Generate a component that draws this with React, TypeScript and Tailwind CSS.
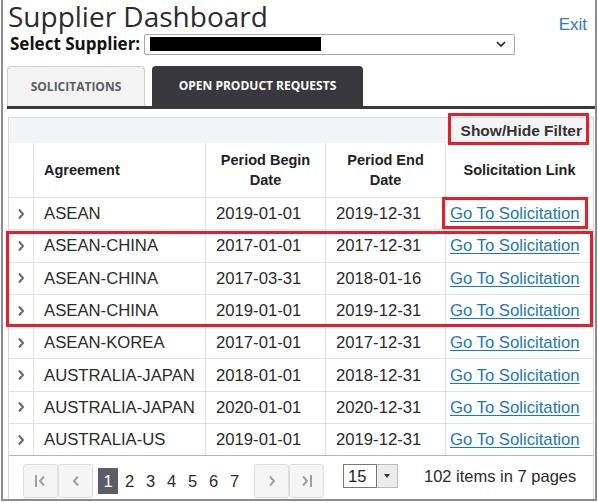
const rows = [
  ["ASEAN", "2019-01-01", "2019-12-31"],
  ["ASEAN-CHINA", "2017-01-01", "2017-12-31"],
  ["ASEAN-CHINA", "2017-03-31", "2018-01-16"],
  ["ASEAN-CHINA", "2019-01-01", "2019-12-31"],
  ["ASEAN-KOREA", "2017-01-01", "2017-12-31"],
  ["AUSTRALIA-JAPAN", "2018-01-01", "2018-12-31"],
  ["AUSTRALIA-JAPAN", "2020-01-01", "2020-12-31"],
  ["AUSTRALIA-US", "2019-01-01", "2019-12-31"],
];

const cols = "grid grid-cols-[25px_172px_120px_120px_1fr]";

function Chevron({ dir = "right", className = "" }: { dir?: "left" | "right"; className?: string }) {
  return (
    <svg width="8" height="12" viewBox="0 0 8 12" className={className}>
      <path
        d={dir === "right" ? "M2 1.5 L6 6 L2 10.5" : "M6 1.5 L2 6 L6 10.5"}
        fill="none"
        stroke="currentColor"
        strokeWidth="2"
      />
    </svg>
  );
}

function PagerButton({ children }: { children: React.ReactNode }) {
  return (
    <div className="w-[35px] h-[34px] flex items-center justify-center bg-[#f5f5f5] border border-[#dedede] rounded-[3px] text-[#a0a0a0]">
      {children}
    </div>
  );
}

export default function App() {
  return (
    <div className="relative w-[598px] h-[503px] bg-white overflow-hidden font-['Liberation_Sans',Arial,sans-serif] text-[#333]">
      <div className="ml-[1px] w-[596px] h-[501px] border-x-2 border-b-2 border-[#8c8c8c] flex flex-col">
        <div className="flex justify-between h-[32px]">
          <h1 className="pl-[5px] text-[28px] leading-[32px] font-['Open_Sans',sans-serif] text-[#2b2b2b]">
            Supplier Dashboard
          </h1>
          <a className="mt-[15px] mr-[8px] text-[17px] leading-[20px] text-[#2b7cb9]">Exit</a>
        </div>

        <div className="flex items-center h-[22px] mt-[1px] pl-[7px]">
          <span className="font-['Open_Sans',sans-serif] font-bold text-[17px] text-[#111] mr-[4px]">
            Select Supplier:
          </span>
          <div className="w-[371px] h-[21px] border border-[#a9a9a9] rounded-[2px] flex items-center pl-[5px] pr-[8px] justify-between">
            <div className="w-[171px] h-[14px] bg-black" />
            <svg width="10" height="7" viewBox="0 0 10 7">
              <path d="M1 1 L5 5 L9 1" fill="none" stroke="#222" strokeWidth="1.6" />
            </svg>
          </div>
        </div>

        <div className="mt-[11px] ml-[4px] flex items-end gap-[7px] h-[40px]">
          <div className="w-[138px] h-[40px] bg-[#f3f3f4] border border-b-0 border-[#cfcfd2] rounded-t-[4px] flex items-center justify-center font-['Open_Sans',sans-serif] font-bold text-[12px] text-[#5a5e66]">
            SOLICITATIONS
          </div>
          <div className="w-[211px] h-[40px] bg-[#38383d] rounded-t-[4px] flex items-center justify-center font-['Open_Sans',sans-serif] font-bold text-[12px] text-white">
            OPEN PRODUCT REQUESTS
          </div>
        </div>
        <div className="ml-[4px] h-[3px] bg-[#38383d]" />

        <div className="mt-[8px] ml-[5px] mr-[1px] flex-1 border border-[#d8d8d8] border-b-0 flex flex-col">
          <div className="h-[25px] shrink-0 bg-[#f3f4f5] flex justify-end items-center pr-[11px]">
            <span className="font-bold text-[15.5px] text-[#333]">Show/Hide Filter</span>
          </div>

          <div className={`${cols} h-[55px] shrink-0 font-bold text-[14.5px] leading-[20px] text-[#222] border-b border-[#e2e2e2]`}>
            <div className="border-r border-[#e2e2e2]" />
            <div className="flex items-center pl-[10px] border-r border-[#e2e2e2]">Agreement</div>
            <div className="flex items-center justify-center text-center border-r border-[#e2e2e2]">
              Period Begin
              <br />
              Date
            </div>
            <div className="flex items-center justify-center text-center border-r border-[#e2e2e2]">
              Period End
              <br />
              Date
            </div>
            <div className="flex items-center justify-center">Solicitation Link</div>
          </div>

          {rows.map(([name, begin, end], i) => (
            <div
              key={i}
              className={`${cols} h-[32.3px] shrink-0 text-[16.7px] text-[#2b2b2b] border-b ${
                i === rows.length - 1 ? "border-[#b5b5b5]" : "border-[#e2e2e2]"
              }`}
            >
              <div className="flex items-center justify-center border-r border-[#e2e2e2] text-[#6a6a6a]">
                <Chevron />
              </div>
              <div className="flex items-center pl-[10px] border-r border-[#e2e2e2]">{name}</div>
              <div className="flex items-center pl-[10px] border-r border-[#e2e2e2]">{begin}</div>
              <div className="flex items-center pl-[10px] border-r border-[#e2e2e2]">{end}</div>
              <div className="flex items-center pl-[4px]">
                <a className="text-[#1d78b8] underline underline-offset-[2px]">Go To Solicitation</a>
              </div>
            </div>
          ))}

          <div className="flex items-start pt-[8px] pl-[14px]">
            <div className="flex">
              <PagerButton>
                <span className="flex items-center gap-[1px]">
                  <span className="w-[2px] h-[12px] bg-[#a0a0a0]" />
                  <Chevron dir="left" />
                </span>
              </PagerButton>
              <PagerButton>
                <Chevron dir="left" />
              </PagerButton>
            </div>
            <div className="flex items-center h-[34px] ml-[5px] text-[16.5px] text-[#2b2b2b]">
              <span className="w-[20px] h-[26px] bg-[#5e5d66] text-white flex items-center justify-center mr-[1px]">1</span>
              {[2, 3, 4, 5, 6, 7].map((n) => (
                <span key={n} className="w-[21px] text-center">
                  {n}
                </span>
              ))}
            </div>
            <div className="flex ml-[9px]">
              <PagerButton>
                <Chevron />
              </PagerButton>
              <PagerButton>
                <span className="flex items-center gap-[1px]">
                  <Chevron />
                  <span className="w-[2px] h-[12px] bg-[#a0a0a0]" />
                </span>
              </PagerButton>
            </div>
            <div className="ml-[19px] flex h-[24px]">
              <div className="w-[34px] border border-[#777] flex items-center pl-[4px] text-[16.5px] text-[#222]">15</div>
              <div className="w-[21px] border border-l-0 border-[#bbb] bg-[#ececec] flex items-center justify-center">
                <svg width="6" height="4" viewBox="0 0 6 4">
                  <path d="M0 0 L6 0 L3 4 Z" fill="#333" />
                </svg>
              </div>
            </div>
            <span className="ml-[26px] leading-[24px] text-[16.5px] text-[#2b2b2b]">102 items in 7 pages</span>
          </div>
        </div>
      </div>

      <div className="absolute left-[448px] top-[113px] w-[141px] h-[32px] border-[3px] border-[#e61e2a]" />
      <div className="absolute left-[442px] top-[197px] w-[146px] h-[32px] border-[3px] border-[#e61e2a]" />
      <div className="absolute left-[6px] top-[231px] w-[587px] h-[96px] border-[3px] border-[#e61e2a]" />
    </div>
  );
}
